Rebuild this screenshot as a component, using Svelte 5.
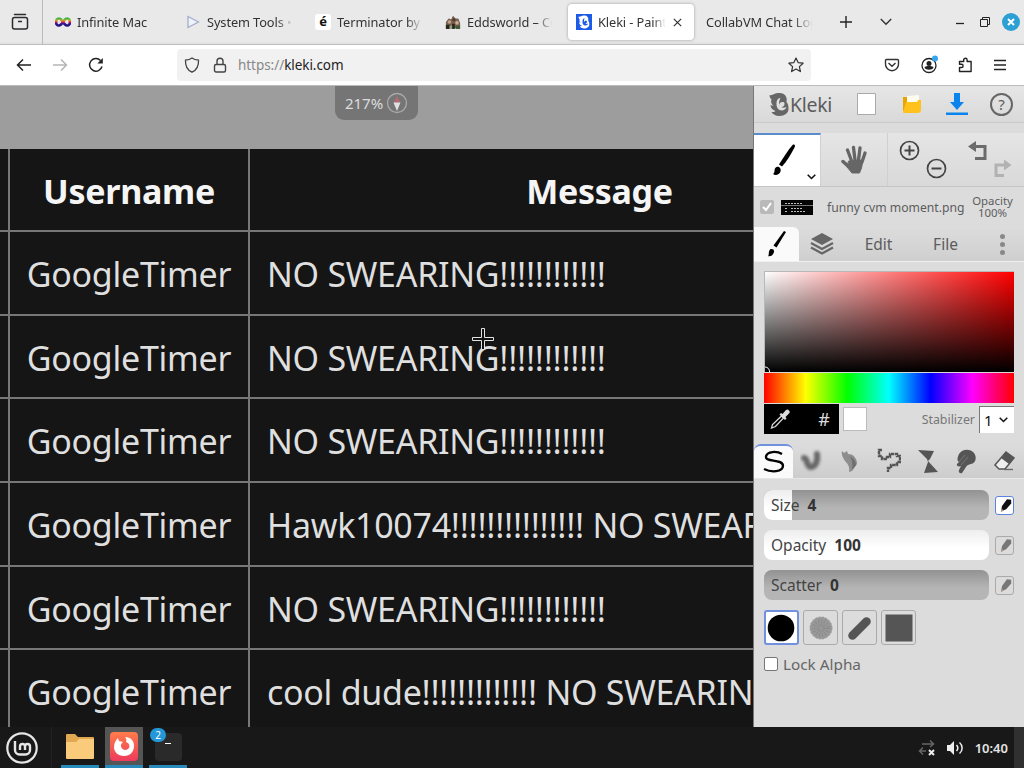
<script lang="ts">
  interface Tab {
    title: string;
    icon: string;
    active?: boolean;
  }

  const tabs: Tab[] = [
    { title: 'Infinite Mac', icon: 'infinity' },
    { title: 'System Tools •', icon: 'play' },
    { title: 'Terminator by', icon: 'letter' },
    { title: 'Eddsworld – Co', icon: 'castle' },
    { title: 'Kleki - Paint', icon: 'kleki', active: true },
    { title: 'CollabVM Chat Log', icon: '' }
  ];

  const rows = [
    { user: 'GoogleTimer', message: 'NO SWEARING!!!!!!!!!!!!' },
    { user: 'GoogleTimer', message: 'NO SWEARING!!!!!!!!!!!!' },
    { user: 'GoogleTimer', message: 'NO SWEARING!!!!!!!!!!!!' },
    { user: 'GoogleTimer', message: 'Hawk10074!!!!!!!!!!!!!!! NO SWEARING' },
    { user: 'GoogleTimer', message: 'NO SWEARING!!!!!!!!!!!!' },
    { user: 'GoogleTimer', message: 'cool dude!!!!!!!!!!!!! NO SWEARING' }
  ];

  const sliders = [
    { label: 'Size', value: 4, fill: 12.5, pressure: true },
    { label: 'Opacity', value: 100, fill: 100, pressure: false },
    { label: 'Scatter', value: 0, fill: 0, pressure: false }
  ];

  const brushes = ['pen', 'blend', 'sketchy', 'pixel', 'chemy', 'smudge', 'eraser'];
  const tips = ['circle', 'chalk', 'calligraphy', 'square'];

  let activeBrush = $state('pen');
  let activeTip = $state('circle');
  let lockAlpha = $state(false);
</script>

{#snippet klekiMark()}
  <path
    fill-rule="evenodd"
    d="M0 2C3 3 5 0 9 0c4 0 7 1 8 5 .5 2 0 3 0 4 2 2 2 5 2 7 0 4-4 7-9 7-4 0-7-2-8-4 2 0 3 0 4-1-3-1-5-3-5-6l3 1C2 11 1 9 2 6 1 6 0 4 0 2zM11 5C8 5 7 8 7 11c0 3 1 5 3 6 3 1 6 0 7-3-2 1-4 1-5 0 2 0 3-2 3-3 0-2-1-2-2-2-2 0-3 1-3 3-1-3 0-5 1-7z"
  />
{/snippet}

<div class="screen">
  <header class="tabbar">
    <div class="view-button">
      <svg width="18" height="18" viewBox="0 0 18 18" fill="none" stroke="#2b2b30" stroke-width="1.5">
        <path d="M3.5 1.5h11" stroke-linecap="round" />
        <rect x="1.5" y="4.5" width="15" height="11.5" rx="2" />
        <path d="M7 8.5h4" />
      </svg>
    </div>

    <div class="tabs">
      {#each tabs as tab}
        <div class="tab" class:active={tab.active}>
          {#if tab.icon === 'infinity'}
            <svg width="16" height="16" viewBox="0 0 16 16" fill="none" stroke-width="2.6">
              <defs>
                <linearGradient id="rainbow" x1="0" y1="0" x2="0" y2="1">
                  <stop offset="0" stop-color="#3db54a" />
                  <stop offset=".25" stop-color="#c8b020" />
                  <stop offset=".5" stop-color="#d52b50" />
                  <stop offset=".7" stop-color="#4a0f90" />
                  <stop offset="1" stop-color="#181880" />
                </linearGradient>
              </defs>
              <path
                stroke="url(#rainbow)"
                d="M8 8C6.5 5.5 5.5 4.5 4 4.5A2.7 2.7 0 0 0 1.300 8 2.700 2.700 0 0 0 4 11.500C5.500 11.500 6.500 10.500 8 8s2.500-3.500 4-3.500A2.700 2.700 0 0 1 14.700 8 2.700 2.700 0 0 1 12 11.500C10.500 11.500 9.500 10.500 8 8z"
              />
            </svg>
          {:else if tab.icon === 'play'}
            <svg width="16" height="16" viewBox="0 0 16 16">
              <path d="M3 2.5v11L13.5 8z" fill="#f0f2fa" stroke="#a3adcc" stroke-width="1.3" />
            </svg>
          {:else if tab.icon === 'letter'}
            <span class="letter-icon">é</span>
          {:else if tab.icon === 'castle'}
            <svg width="16" height="16" viewBox="0 0 18 16">
              <path d="M1 8l3-4 3 1 2-4 3 3 3 0 2 5v6H1z" fill="#7b6250" />
              <path d="M1 11h5v5H1zM8 10h3v6H8z" fill="#28251c" />
              <circle cx="5" cy="8" r="2" fill="#c39f8b" />
              <circle cx="10" cy="5.5" r="1.8" fill="#4e3a30" />
              <circle cx="13.5" cy="9" r="2" fill="#d0ad98" />
              <path d="M12 12h5v4h-5z" fill="#3f5b38" />
              <path d="M5 12h3v4H5z" fill="#93a180" />
            </svg>
          {:else if tab.icon === 'kleki'}
            <svg width="16" height="16" viewBox="0 0 16 16">
              <rect width="16" height="16" fill="#1c5be6" />
              <g fill="#fff" transform="translate(2.500 1.500) scale(.57)">{@render klekiMark()}</g>
            </svg>
          {/if}
          <span class="tab-title">{tab.title}</span>
          {#if tab.active}
            <svg width="9" height="9" viewBox="0 0 9 9" stroke="#333" stroke-width="1.2">
              <path d="M.8.8l7.4 7.4M8.2.8L.8 8.2" />
            </svg>
          {/if}
        </div>
      {/each}
    </div>

    <svg class="new-tab" width="12" height="12" viewBox="0 0 12 12" stroke="#222" stroke-width="1.4">
      <path d="M6 0v12M0 6h12" />
    </svg>
    <svg class="list-tabs" width="12" height="8" viewBox="0 0 12 8" fill="none" stroke="#333" stroke-width="1.4">
      <path d="M.8 1L6 6.200 11.200 1" />
    </svg>

    <div class="window-buttons">
      <svg width="8" height="10" viewBox="0 0 8 10"><path d="M0 6.500h8" stroke="#222" stroke-width="1.300" /></svg>
      <svg width="10" height="10" viewBox="0 0 10 10" fill="none" stroke="#222">
        <path d="M.5 2.500h7v7h-7zM2.500 2V.500h7v7H8" />
      </svg>
      <span class="window-close">
        <svg width="8" height="8" viewBox="0 0 8 8" stroke="#fff" stroke-width="2">
          <path d="M1 1l6 6M7 1L1 7" />
        </svg>
      </span>
    </div>
  </header>

  <nav class="navbar">
    <svg width="16" height="14" viewBox="0 0 16 14" fill="none" stroke="#222" stroke-width="1.5">
      <path d="M15 7H1.500M7 1.500L1.500 7 7 12.500" />
    </svg>
    <svg width="16" height="14" viewBox="0 0 16 14" fill="none" stroke="#b5b5b8" stroke-width="1.5">
      <path d="M1 7h13.500M9 1.500L14.500 7 9 12.500" />
    </svg>
    <svg width="16" height="16" viewBox="0 0 16 16" fill="none" stroke="#222" stroke-width="1.5">
      <path d="M14 9.500A6.300 6.300 0 1 1 12.500 3.500" />
      <path d="M14.800 1v5.500H9.300z" fill="#222" stroke="none" />
    </svg>

    <div class="urlbar">
      <svg width="16" height="16" viewBox="0 0 16 16" fill="none" stroke="#444" stroke-width="1.3">
        <path d="M8 1C6 2.500 4 3 1.500 3.200 1.200 8.500 3.300 13 8 15.200 12.700 13 14.800 8.500 14.500 3.200 12 3 10 2.500 8 1z" />
      </svg>
      <svg width="14" height="16" viewBox="0 0 14 16" fill="none" stroke="#444" stroke-width="1.4">
        <rect x="1.500" y="7.500" width="11" height="7.500" rx="1.500" />
        <path d="M4 7.500V4.300a3 3 0 0 1 6 0v3.200" />
      </svg>
      <span class="url"><span>https://</span>kleki.com</span>
      <svg class="star" width="16" height="16" viewBox="0 0 16 16" fill="none" stroke="#333" stroke-width="1.2">
        <path
          stroke-linejoin="round"
          d="M8 1l2.100 4.600 5 .6-3.700 3.400 1 5L8 12.100l-4.400 2.500 1-5L.9 6.200l5-.6z"
        />
      </svg>
    </div>

    <div class="nav-tools">
      <svg width="16" height="16" viewBox="0 0 16 16" fill="none" stroke="#333" stroke-width="1.4">
        <path d="M2.500 2.500h11a1 1 0 0 1 1 1v3.700a6.500 6.500 0 0 1-13 0V3.500a1 1 0 0 1 1-1z" />
        <path d="M4.500 6L8 9.200 11.500 6" />
      </svg>
      <svg width="18" height="20" viewBox="0 0 18 20">
        <circle cx="9" cy="10.500" r="7" fill="none" stroke="#222" stroke-width="1.3" />
        <circle cx="9" cy="8.500" r="2.500" fill="#222" />
        <path d="M4.500 12.500c0-2 9-2 9 0-1 3-8 3-9 0z" fill="#222" />
        <circle cx="15" cy="3.500" r="3" fill="#35a5ee" />
      </svg>
      <svg width="16" height="16" viewBox="0 0 16 16" fill="none" stroke="#222" stroke-width="1.4">
        <path
          stroke-linejoin="round"
          d="M1.500 14.500V10.500h2a1.600 1.600 0 0 0 0-3.200h-2V4.500h4.200V3a1.700 1.700 0 0 1 3.400 0v1.500h4v10z"
        />
      </svg>
      <svg width="12" height="12" viewBox="0 0 12 12" stroke="#222" stroke-width="1.3">
        <path d="M0 1.500h12M0 6h12M0 10.500h12" />
      </svg>
    </div>
  </nav>

  <main>
    <section class="workspace">
      <div class="canvas-image">
        <div class="row head">
          <div class="cell stub"></div>
          <div class="cell user">Username</div>
          <div class="cell message">Message</div>
        </div>
        {#each rows as row}
          <div class="row">
            <div class="cell stub"></div>
            <div class="cell user">{row.user}</div>
            <div class="cell message">{row.message}</div>
          </div>
        {/each}
      </div>

      <div class="zoom-badge">
        <span>217%</span>
        <svg width="22" height="22" viewBox="0 0 22 22">
          <circle cx="11" cy="11" r="9.5" fill="none" stroke="#aaa" stroke-width="1.3" />
          <path d="M7.500 10.500L11 4l3.500 6.500z" fill="#b06c70" />
          <path d="M7.500 10.500h7L11 19z" fill="#e2e2e2" />
        </svg>
      </div>

      <svg class="crosshair" width="22" height="22" viewBox="0 0 22 22">
        <path d="M9.500.5h3v9h9v3h-9v9h-3v-9h-9v-3h9z" fill="#111" stroke="#e4e4e4" />
      </svg>
    </section>

    <aside class="panel">
      <div class="topbar">
        <div class="brand">
          <svg width="20" height="23" viewBox="0 0 19 23" fill="#666">{@render klekiMark()}</svg>
          <span>Kleki</span>
        </div>
        <div class="top-item">
          <svg width="19" height="22" viewBox="0 0 19 22">
            <path d="M.5.5h18v21H.5z" fill="#fff" stroke="#aaa" />
          </svg>
        </div>
        <div class="top-item">
          <svg width="20" height="20" viewBox="0 0 20 20">
            <path d="M1 3h6v14H1z" fill="#e9a400" />
            <path d="M5 2l12-1v12H5z" fill="#fffbee" />
            <path d="M4 8h11l1-2h3v10q0 3-3 3H2q-1 0-1-1z" fill="#ffc21c" />
          </svg>
        </div>
        <div class="top-item">
          <svg width="22" height="22" viewBox="0 0 22 22" fill="#0b84ee">
            <path d="M8 0h6v9h4l-7 8-7-8h4zM0 19.500h22V22H0z" />
          </svg>
        </div>
        <div class="top-item">
          <span class="help">?</span>
        </div>
      </div>

      <div class="toolrow">
        <button class="tool selected" type="button" aria-label="Brush">
          <svg width="24" height="34" viewBox="0 0 24 34">
            <path d="M20 .5c2-.5 2.500 1 1.500 3C18 10 14 17 9 22.500l-3-2C10 14 15 6 20 .5z" />
            <path d="M0 30c3-2 0-5 3.500-7 2.500-.8 5 1.500 4 4.500-1 3-5 4.500-7.500 2.500z" />
          </svg>
          <svg class="more" width="9" height="6" viewBox="0 0 9 6" fill="none" stroke="#111" stroke-width="1.6">
            <path d="M.7.8l3.800 3.700L8.300.8" />
          </svg>
        </button>
        <button class="tool" type="button" aria-label="Hand">
          <svg width="26" height="30" viewBox="0 0 26 30" stroke="#666" stroke-linecap="round" fill="none">
            <path d="M11 17L6.500 5M14 15L12.500 2.500M17.500 15l1.500-12M21 17l3-9" stroke-width="3.300" />
            <path d="M2 16.500l5 4.500" stroke-width="3.500" />
            <path d="M8 16l14-1-1.500 8-2 5H11l-5-6z" fill="#666" stroke-width="1" />
          </svg>
        </button>
        <div class="zooms">
          <svg width="48" height="40" viewBox="0 0 48 40" fill="none" stroke="#444" stroke-width="1.7">
            <circle cx="10.500" cy="10.500" r="9" />
            <path d="M10.500 5.500v10M5.500 10.500h10" stroke-width="2" />
            <circle cx="37.500" cy="28.500" r="9" />
            <path d="M32.500 28.500h10" stroke-width="2" />
          </svg>
        </div>
        <div class="undo-redo">
          <svg width="44" height="38" viewBox="0 0 44 38" fill="none" stroke-width="3">
            <path d="M7 5.500h10v12H7" stroke="#6b6b6b" />
            <path d="M0 5.500L8 0v11z" fill="#6b6b6b" />
            <path d="M36 34.500h-8V24h9" stroke="#b2b2b2" />
            <path d="M43.500 24L36 18.500v11z" fill="#b2b2b2" />
          </svg>
        </div>
      </div>

      <div class="layer">
        <span class="checkbox">
          <svg width="10" height="10" viewBox="0 0 10 10" fill="none" stroke="#fff" stroke-width="2">
            <path d="M1 5l3 3 5-7" />
          </svg>
        </span>
        <svg class="thumb" width="32" height="15" viewBox="0 0 32 15">
          <rect width="32" height="15" fill="#050505" />
          <path d="M0 5.500h32" stroke="#777" />
          <path d="M4 3.500h18M4 8.500h3m3 0h12M4 11.500h3m3 0h14" stroke="#bbb" stroke-dasharray="2 1" />
        </svg>
        <span class="layer-name">funny cvm moment.png</span>
        <span class="layer-opacity">Opacity<br />100%</span>
      </div>

      <div class="panel-tabs">
        <div class="panel-tab current">
          <svg width="20" height="28" viewBox="0 0 20 28">
            <path d="M17 1l2 1L9.500 17.500l-3-2z" />
            <path d="M1 26c1.500-1 0-4 2-6.500 2-1 4.500 0 4 2.500-.7 3-3.500 5-6 4z" />
          </svg>
        </div>
        <div class="panel-tab layers">
          <svg width="24" height="22" viewBox="0 0 24 22" fill="#666">
            <path d="M12 0l11 6-11 6L1 6z" />
            <path d="M1 10l11 6 11-6M1 14.500l11 6 11-6" fill="none" stroke="#666" stroke-width="2.200" />
          </svg>
        </div>
        <div class="panel-tab edit">Edit</div>
        <div class="panel-tab file">File</div>
        <div class="panel-tab dots"><i></i><i></i><i></i></div>
      </div>

      <div class="brush-panel">
        <div class="sv-picker">
          <svg class="sv-handle" width="6" height="6" viewBox="0 0 6 6" fill="none" stroke="#fff">
            <path d="M0 1a4.500 4.500 0 0 1 4.500 5" />
          </svg>
        </div>
        <div class="hue-picker"></div>

        <div class="color-row">
          <div class="current-color">
            <svg width="20" height="20" viewBox="0 0 20 20">
              <path d="M11.500 7l2 2-8 8.500-4 1.500 1-3.500z" fill="none" stroke="#d8d8d8" stroke-width="1.300" />
              <path d="M9.500 5.500l1.500-1.500 1.500 1L16 1q1.500-1 3 .5t0 3L15.500 8l1 1.500L15 11z" fill="#ddd" />
            </svg>
            <span>#</span>
          </div>
          <div class="second-color"></div>
          <span class="stabilizer">Stabilizer</span>
          <div class="select">
            1
            <svg width="9" height="6" viewBox="0 0 9 6" fill="none" stroke="#111" stroke-width="1.5">
              <path d="M.7.7l3.800 3.800L8.300.7" />
            </svg>
          </div>
        </div>
      </div>

      <div class="brush-tabs">
        {#each brushes as brush}
          <button
            type="button"
            class="brush"
            class:chosen={activeBrush === brush}
            aria-label={brush}
            onclick={() => (activeBrush = brush)}
          >
            <svg width="24" height="26" viewBox="0 0 24 26">
              {#if brush === 'pen'}
                <path
                  d="M21 5C16 2 6 2 5 7.500c-1 6 16 2 17 9 0 7-12 7-19 3.500"
                  fill="none"
                  stroke="#000"
                  stroke-width="2.300"
                />
              {:else if brush === 'blend'}
                <g class="soft" fill="none" stroke="#666" stroke-linecap="round">
                  <path d="M4 10c4 0 2 9 7 9 5 0 7-7 6-13" stroke-width="6" />
                </g>
              {:else if brush === 'sketchy'}
                <path d="M4 3l2 2 3-2 1 3c6 0 9 5 9 10l-5 7-3 1c1-5-1-8-4-11-2-3-4-7-3-10z" fill="#8d8d8d" />
                <path d="M10 8c4 1 5 7 4 14l4-5c0-4-3-8-8-9z" fill="#707070" />
              {:else if brush === 'pixel'}
                <path
                  d="M5 2H2v6h3v3h5V9h3V6h7v2h3v6h-3v3h-6v3h-3v4"
                  fill="none"
                  stroke="#555"
                  stroke-width="2.400"
                  stroke-dasharray="3.500 .6"
                />
              {:else if brush === 'chemy'}
                <path d="M2 2l16 1-4 8-2 2 10 11-14 1 4-11-1-3z" fill="#555" />
              {:else if brush === 'smudge'}
                <path
                  d="M5 6c3-5 11-6 15-1 3 4 2 10-3 11-3 1-4 1-5 3l-4 6c-2 1-4-1-3-3l2-4c-2 1-5 0-4-2l2-2c-2-1-2-4 0-8z"
                  fill="#555"
                />
                <path d="M7 17l7-8M5 14l6-7" stroke="#777" />
              {:else}
                <path d="M13 4l8 6-9 11H6l-4-4z" fill="#eee" stroke="#555" stroke-width="1.5" />
                <path d="M13 4l8 6-5 6-8-6z" fill="#555" />
                <path d="M11 21.500h9" stroke="#666" stroke-width="1.300" />
              {/if}
            </svg>
          </button>
        {/each}
      </div>

      <div class="settings">
        {#each sliders as slider}
          <div class="slider-row">
            <div class="slider">
              <div class="fill" style="width: {slider.fill}%"></div>
              <div class="slider-text">
                <span>{slider.label}</span>
                <b>{slider.value}</b>
              </div>
            </div>
            <div class="pressure" class:on={slider.pressure}>
              <svg width="15" height="15" viewBox="0 0 18 18">
                <path d="M12 1.500L17 2v4.500l-6 7-6 2.500 1-6.500z" />
                <path d="M4.500 17l1-4 3 2z" fill="#a98" />
              </svg>
            </div>
          </div>
        {/each}

        <div class="tips">
          {#each tips as tip}
            <button
              type="button"
              class="tip"
              class:chosen={activeTip === tip}
              aria-label={tip}
              onclick={() => (activeTip = tip)}
            >
              <svg width="30" height="30" viewBox="0 0 30 30">
                {#if tip === 'circle'}
                  <circle cx="15" cy="15" r="13.3" />
                {:else if tip === 'chalk'}
                  <circle cx="15" cy="15" r="11" fill="#999" stroke="#999" stroke-dasharray="2 1.5" />
                  <circle cx="15" cy="15" r="7" fill="none" stroke="#8b8b8b" stroke-width="4" stroke-dasharray="1 2" />
                  <circle cx="15" cy="15" r="3" fill="none" stroke="#8b8b8b" stroke-width="3" stroke-dasharray="1 1" />
                {:else if tip === 'calligraphy'}
                  <path d="M7.500 22.500l14-14" stroke="#555" stroke-width="8.500" stroke-linecap="round" />
                {:else}
                  <path d="M1.500 1.500h27v27h-27z" fill="#555" />
                {/if}
              </svg>
            </button>
          {/each}
        </div>

        <label class="lock-alpha">
          <input type="checkbox" bind:checked={lockAlpha} />
          <span>Lock Alpha</span>
        </label>
      </div>
    </aside>
  </main>

  <footer class="taskbar">
    <div class="start">
      <svg width="32" height="32" viewBox="0 0 32 32" fill="none" stroke="#e6e6e6">
        <circle cx="16" cy="16" r="14.700" stroke-width="2.200" />
        <path
          d="M9 9v9a4.500 4.500 0 0 0 4.500 4.500h6A4.500 4.500 0 0 0 24 18v-3.500a2.500 2.500 0 0 0-5 0V18m0-3.500a2.500 2.500 0 0 0-5 0V18"
          stroke-width="2.400"
        />
      </svg>
    </div>
    <div class="task">
      <svg width="30" height="27" viewBox="0 0 30 27">
        <path d="M1 2q0-1 1-1h8l3 3h15q1 0 1 1v19H1z" fill="#e0a850" />
        <path d="M1 9h10l3-3h15v19q0 1-1 1H2q-1 0-1-1z" fill="#fbcb7c" />
      </svg>
    </div>
    <div class="task focused">
      <svg width="28" height="29" viewBox="0 0 28 29">
        <defs>
          <linearGradient id="fox" x1="0" y1="0" x2="0" y2="1">
            <stop offset="0" stop-color="#ff7c4b" />
            <stop offset="1" stop-color="#ee3a5c" />
          </linearGradient>
        </defs>
        <rect width="28" height="29" rx="4" fill="url(#fox)" />
        <path
          d="M8 6l1 3 4 1c-3 2-3 7 2 8 4 0 6-4 3-7l-2-1c1-2 0-4-1-5 6 0 9 4 9 9 0 6-4 10-10 10S4 20 4 15c0-4 2-7 4-9z"
          fill="#fff"
        />
      </svg>
    </div>
    <div class="task">
      <span class="terminal"><i></i></span>
      <span class="count">2</span>
    </div>

    <div class="tray">
      <svg width="18" height="18" viewBox="0 0 18 18" fill="none" stroke="#666" stroke-width="1.5">
        <path d="M4 5h11M12 1.500L15.500 5 12 8M8 12H1.500M5 8.500L1.500 12 5 15.500" />
        <path d="M11 11l5 5M16 11l-5 5" stroke="#eee" stroke-width="2" />
      </svg>
      <svg width="17" height="16" viewBox="0 0 17 16" fill="none" stroke="#eee" stroke-width="1.5">
        <path d="M0 5h3l4-4v14l-4-4H0z" fill="#eee" stroke="none" />
        <path d="M9.500 5c1.800 2 1.800 4 0 6M12.500 2.500c3.500 3 3.500 8 0 11" />
      </svg>
      <span class="clock">10:40</span>
    </div>
    <div class="show-desktop"></div>
  </footer>
</div>

<style>
  :global(body) {
    overflow: hidden;
  }

  .screen {
    width: 1024px;
    height: 768px;
    display: flex;
    flex-direction: column;
    overflow: hidden;
    background: #dcdcdc;
    font-family: 'Noto Sans', 'Open Sans', sans-serif;
    color: #333;
  }

  .screen * {
    box-sizing: border-box;
  }

  svg {
    display: block;
    flex: none;
  }

  button {
    border: none;
    padding: 0;
    margin: 0;
    background: none;
    font: inherit;
  }

  /* Browser chrome */
  .tabbar {
    height: 45px;
    flex: none;
    display: flex;
    align-items: center;
    background: #e9e9e9;
    border-bottom: 1px solid #bdbdbd;
    box-shadow: inset 0 -2px #e3e3e3;
  }

  .view-button {
    width: 43px;
    height: 44px;
    display: flex;
    align-items: center;
    padding-left: 11px;
    border-right: 1px solid #bcbcbc;
  }

  .tabs {
    display: flex;
    height: 44px;
    align-items: center;
  }

  .tab {
    width: 130px;
    height: 36px;
    display: flex;
    align-items: center;
    gap: 6px;
    padding: 0 9px 0 12px;
    overflow: hidden;
    font-size: 12.8px;
    letter-spacing: -0.1px;
    border-radius: 4px;
  }

  .tab.active {
    width: 126px;
    margin-left: 5px;
    padding: 0 12px 0 8px;
    background: #fff;
    box-shadow: 0 0 3px #999;
  }

  .tab-title {
    flex: 1;
    overflow: hidden;
    white-space: nowrap;
    mask-image: linear-gradient(90deg, #000 80%, transparent 98%);
  }

  .letter-icon {
    width: 16px;
    height: 16px;
    flex: none;
    border-radius: 3px;
    background: #fff;
    color: #111;
    text-align: center;
    font-size: 13px;
    line-height: 15px;
    font-weight: bold;
  }

  .new-tab {
    margin-left: 16px;
  }

  .list-tabs {
    margin-left: 28px;
  }

  .window-buttons {
    flex: 1;
    display: flex;
    align-items: center;
    justify-content: flex-end;
    gap: 16px;
    padding-right: 4px;
  }

  .window-close {
    width: 18px;
    height: 18px;
    margin-left: -4px;
    border-radius: 50%;
    background: #2c9fd3;
    display: grid;
    place-items: center;
  }

  .navbar {
    height: 41px;
    flex: none;
    display: flex;
    align-items: center;
    gap: 20px;
    padding: 0 18px 0 16px;
    background: #fff;
    border-bottom: 1px solid #bbb;
  }

  .urlbar {
    width: 634px;
    height: 32px;
    display: flex;
    align-items: center;
    margin-left: 53px;
    padding: 0 7px;
    border-radius: 4px;
    background: #f1f1f1;
  }

  .urlbar svg + svg {
    margin-left: 13px;
  }

  .url {
    margin-left: 11px;
    font-size: 13.5px;
    letter-spacing: -0.05px;
    color: #222;
  }

  .url span {
    color: #888;
  }

  .star {
    margin-left: auto;
  }

  .nav-tools {
    flex: 1;
    display: flex;
    align-items: center;
    justify-content: flex-end;
    gap: 20px;
  }

  main {
    height: 641px;
    flex: none;
    display: flex;
  }

  /* Canvas */
  .workspace {
    position: relative;
    width: 754px;
    flex: none;
    padding-top: 63px;
    overflow: hidden;
    background: #9d9d9d;
    border-right: 1px solid #777;
  }

  .canvas-image {
    height: 578px;
    background: #151515;
    color: #dfdfdf;
    font-size: 34px;
    letter-spacing: -0.28px;
    overflow: hidden;
  }

  .row {
    display: flex;
    height: 83.65px;
    width: 962px;
  }

  .row.head {
    height: 83px;
    font-weight: bold;
    color: #f5f5f5;
    text-align: center;
  }

  .cell {
    border-right: 2px solid #777;
    border-bottom: 2px solid #777;
    line-height: 84px;
    white-space: nowrap;
    overflow: hidden;
  }

  .stub {
    width: 10px;
  }

  .user {
    width: 240px;
    text-align: center;
  }

  .message {
    flex: 1;
    padding-left: 17px;
  }

  .head .message {
    padding: 0 11px 0 0;
  }

  .zoom-badge {
    position: absolute;
    left: 335px;
    top: 0;
    width: 83px;
    height: 34px;
    display: flex;
    align-items: center;
    justify-content: center;
    gap: 3px;
    background: #757575;
    color: #ddd;
    font-size: 15px;
    border-radius: 0 0 9px 9px;
  }

  .crosshair {
    position: absolute;
    left: 472px;
    top: 242px;
  }

  /* Kleki side panel */
  .panel {
    width: 270px;
    background: #dcdcdc;
    color: #5c5c5c;
  }

  .topbar {
    height: 37px;
    display: flex;
    align-items: center;
    background: linear-gradient(#e6e6e6, #d9d9d9);
    border-bottom: 1px solid #cacaca;
  }

  .brand {
    width: 90px;
    height: 36px;
    display: flex;
    align-items: center;
    gap: 1px;
    padding-left: 15px;
    font-size: 19.5px;
    letter-spacing: -0.3px;
  }

  .top-item {
    width: 45px;
    display: flex;
    justify-content: center;
  }

  .help {
    width: 23px;
    height: 23px;
    border: 2px solid #666;
    border-radius: 50%;
    font-size: 15px;
    line-height: 19px;
    text-align: center;
  }

  .toolrow {
    height: 54px;
    margin-top: 10px;
    display: flex;
    background: linear-gradient(#e5e5e5, #d9d9d9);
    border-bottom: 1px solid #c5c5c5;
  }

  .tool {
    width: 67px;
    position: relative;
    display: flex;
    align-items: center;
    justify-content: center;
    padding-right: 1px;
    border-right: 1px solid #d0d0d0;
  }

  .tool.selected {
    background: #fff;
    border-top: 2px solid #5b8ccd;
    padding-right: 4px;
  }

  .more {
    position: absolute;
    right: 4px;
    bottom: 6px;
  }

  .zooms {
    width: 67px;
    padding: 7px 0 0 11px;
  }

  .undo-redo {
    padding: 8px 0 0 13px;
  }

  .layer {
    height: 40px;
    display: flex;
    align-items: center;
    padding-left: 6px;
    font-size: 12.2px;
  }

  .checkbox {
    width: 14px;
    height: 14px;
    display: grid;
    place-items: center;
    border-radius: 2px;
    background: #b9b9b9;
  }

  .thumb {
    margin-left: 7px;
  }

  .layer-name {
    width: 139px;
    margin-left: 14px;
    white-space: nowrap;
  }

  .layer-opacity {
    flex: 1;
    margin-right: 5px;
    font-size: 11.4px;
    line-height: 12px;
    text-align: center;
    white-space: nowrap;
  }

  .panel-tabs {
    height: 35px;
    display: flex;
    background: linear-gradient(#dcdcdc, #cfcfcf);
    border-bottom: 1px solid #f0f0f0;
    font-size: 15.5px;
  }

  .panel-tab {
    display: flex;
    align-items: center;
    justify-content: center;
  }

  .panel-tab.current {
    width: 45px;
    background: #fafafa;
    border-radius: 0 6px 0 0;
  }

  .layers {
    width: 46px;
  }

  .edit {
    width: 67px;
  }

  .file {
    width: 67px;
  }

  .dots {
    flex: 1;
    flex-direction: column;
    gap: 3px;
    padding-left: 2px;
  }

  .dots i {
    width: 5px;
    height: 5px;
    border-radius: 50%;
    background: #888;
  }

  .brush-panel {
    padding: 9px 10px 0;
  }

  .sv-picker {
    position: relative;
    height: 101px;
    background: linear-gradient(transparent, #000), linear-gradient(90deg, #fff, #f00);
    border: 1px solid #b8b8b8;
    border-width: 1px 0 0 1px;
  }

  .sv-handle {
    position: absolute;
    left: 0;
    bottom: 0;
  }

  .hue-picker {
    height: 31px;
    border-top: 1px solid #d8d8d8;
    background: linear-gradient(90deg, #f00, #ff0, #0f0, #0ff, #00f, #f0f, #f00);
  }

  .color-row {
    display: flex;
    align-items: center;
    height: 30px;
    margin-top: 1px;
  }

  .current-color {
    width: 75px;
    height: 30px;
    display: flex;
    align-items: center;
    justify-content: space-between;
    padding: 0 9px 0 6px;
    background: #000;
    color: #ddd;
    font-size: 18px;
  }

  .second-color {
    width: 24px;
    height: 24px;
    margin-left: 4px;
    background: #fff;
    border: 1px solid #bbb;
  }

  .stabilizer {
    margin-left: auto;
    margin-right: 4px;
    font-size: 12.4px;
    color: #777;
  }

  .select {
    width: 35px;
    height: 27px;
    display: flex;
    align-items: center;
    justify-content: space-between;
    padding: 0 6px 0 4px;
    background: #fff;
    border: 1px solid #777;
    border-width: 1px 0 0 1px;
    color: #111;
    font-size: 15px;
  }

  .brush-tabs {
    height: 35px;
    display: flex;
    margin-top: 10px;
    background: linear-gradient(#dcdcdc, #cdcdcd);
    border-bottom: 1px solid #e6e6e6;
  }

  .brush {
    width: 38.6px;
    flex: none;
    display: grid;
    place-items: center;
  }

  .brush.chosen {
    background: #fafafa;
    border-top: 2px solid #7190de;
    border-radius: 7px 7px 0 0;
  }

  .soft {
    filter: blur(1.5px);
  }

  .settings {
    padding: 11px 10px 0;
  }

  .slider-row {
    display: flex;
    justify-content: space-between;
    align-items: center;
    margin-bottom: 10px;
  }

  .slider {
    position: relative;
    width: 225px;
    height: 30px;
    border-radius: 8px;
    overflow: hidden;
    background: linear-gradient(#929292, #b5b5b5 60%);
  }

  .fill {
    height: 30px;
    background: linear-gradient(#eee, #fff 60%);
  }

  .slider-text {
    position: absolute;
    left: 7px;
    top: 0;
    display: flex;
    gap: 8px;
    font-size: 15.5px;
    line-height: 30px;
    color: #444;
  }

  .slider-text b {
    color: #333;
  }

  .pressure {
    width: 19px;
    height: 19px;
    display: grid;
    place-items: center;
    border: 1px solid #aaa;
    border-radius: 3px;
    fill: #777;
  }

  .pressure.on {
    border: 1.5px solid #5e83df;
    background: #fff;
    fill: #111;
  }

  .tips {
    display: flex;
    gap: 4px;
  }

  .tip {
    width: 35px;
    height: 35px;
    display: grid;
    place-items: center;
    border: 1px solid #aaa;
    border-radius: 3px;
  }

  .tip.chosen {
    border: 2px solid #7190de;
    background: #fff;
  }

  .tip.chosen svg {
    margin-left: -1px;
  }

  .lock-alpha {
    display: flex;
    align-items: center;
    gap: 5px;
    margin-top: 8px;
    font-size: 15.3px;
    line-height: 22px;
    color: #666;
  }

  .lock-alpha input {
    appearance: none;
    width: 14px;
    height: 14px;
    margin: 0;
    border: 1px solid #777;
    border-radius: 2px;
    background: #fff;
  }

  /* Desktop taskbar */
  .taskbar {
    height: 41px;
    flex: none;
    display: flex;
    background: #181818;
  }

  .start {
    width: 52px;
    padding: 5px 0 0 6px;
    margin-right: 6px;
    border-right: 1px solid #222;
  }

  .task {
    position: relative;
    width: 38px;
    height: 41px;
    margin: 0 3px;
    display: flex;
    justify-content: center;
    padding-top: 6px;
    border-bottom: 3px solid #278abb;
  }

  .task.focused {
    background: #555;
    padding-top: 5px;
  }

  .terminal {
    width: 27px;
    height: 28px;
    border-radius: 4px;
    background: #2a2a2a;
    display: flex;
    justify-content: center;
    padding-top: 10px;
  }

  .terminal i {
    width: 6px;
    height: 1px;
    background: #fff;
  }

  .count {
    position: absolute;
    left: 1px;
    top: 1px;
    width: 16px;
    height: 14px;
    border-radius: 7px;
    background: #2497d8;
    color: #fff;
    font-size: 10px;
    line-height: 14px;
    text-align: center;
  }

  .tray {
    flex: 1;
    display: flex;
    align-items: center;
    justify-content: flex-end;
    gap: 11px;
    padding-right: 6px;
  }

  .clock {
    color: #e2e2e2;
    font-size: 13px;
    font-weight: 600;
  }

  .show-desktop {
    width: 10px;
    background: #303030;
  }
</style>
